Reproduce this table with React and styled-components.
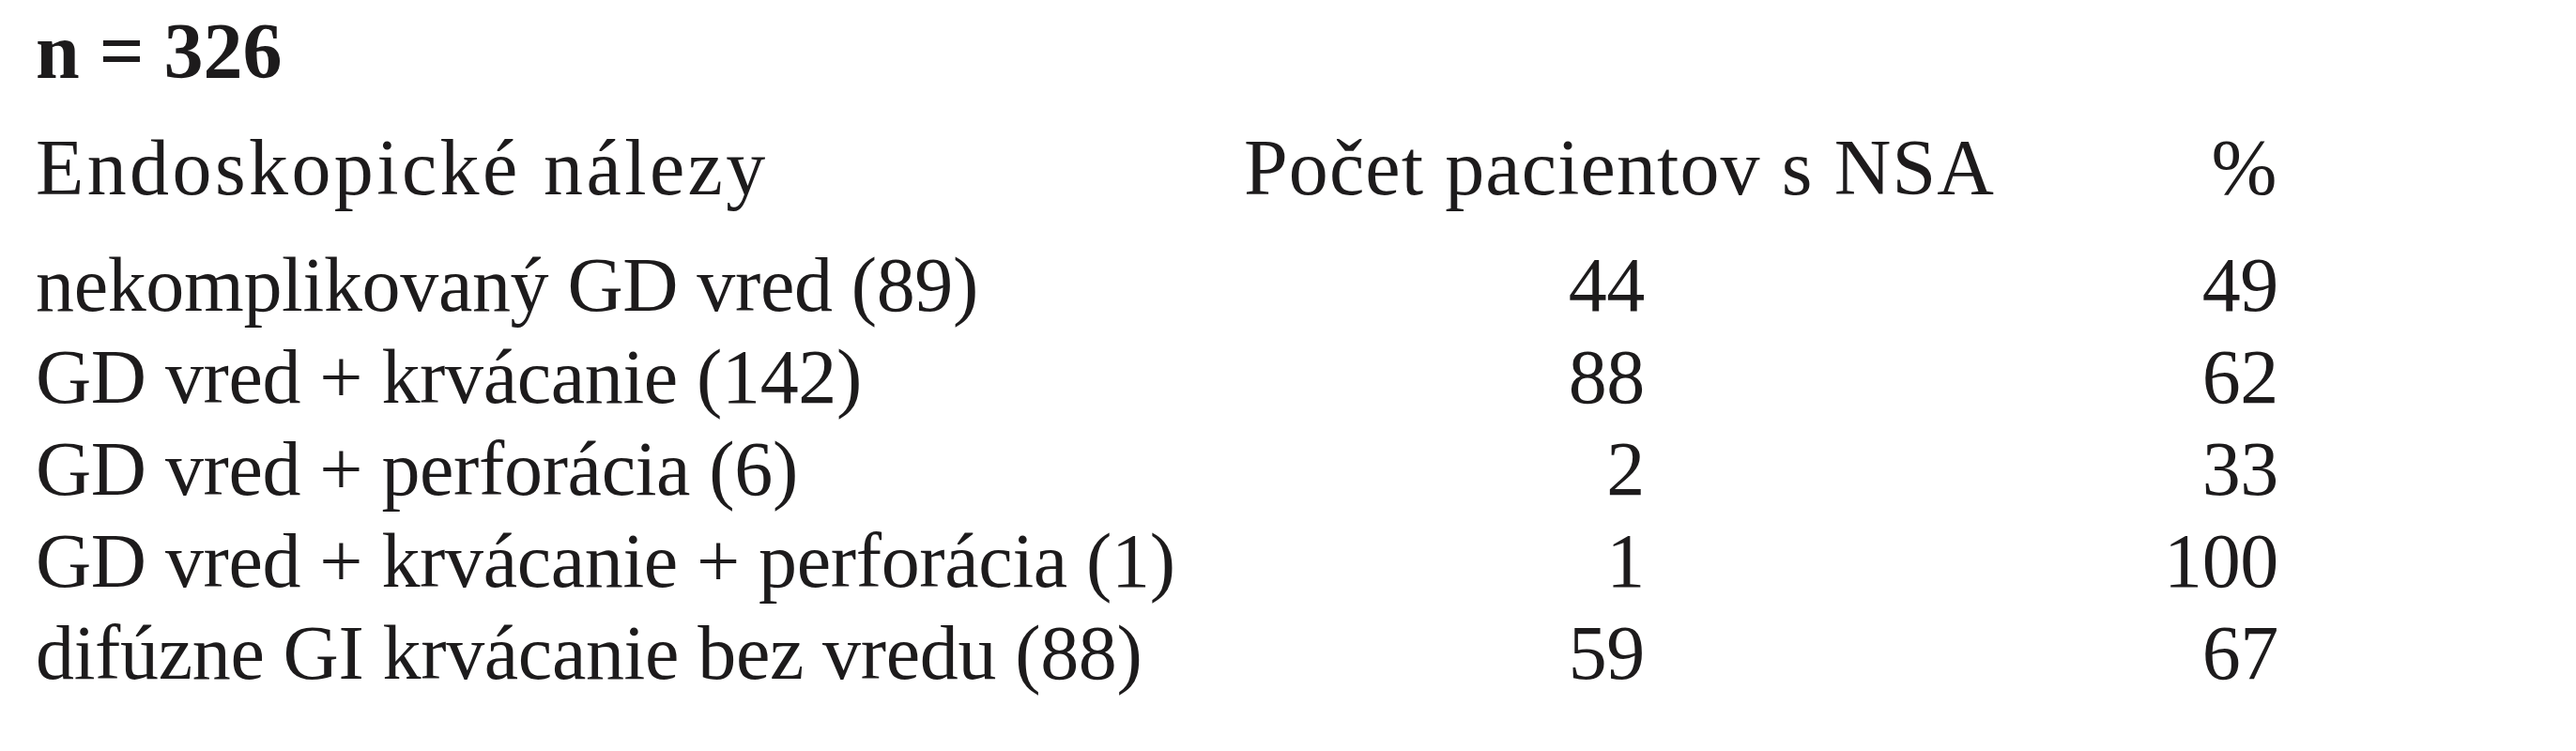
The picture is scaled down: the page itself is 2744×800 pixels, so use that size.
import React from 'react';
import styled, { createGlobalStyle } from 'styled-components';

const GlobalStyle = createGlobalStyle`
  html, body {
    margin: 0;
    padding: 0;
    background: #ffffff;
  }
`;

const Page = styled.div`
  width: 2744px;
  height: 800px;
  box-sizing: border-box;
  padding: 6px 0 0 38px;
  font-family: 'Liberation Serif', 'Times New Roman', serif;
  font-size: 84px;
  color: #1d1b1c;
`;

const Title = styled.div`
  font-weight: 700;
  line-height: 97px;
  margin-bottom: 27px;
`;

const Row = styled.div`
  display: grid;
  grid-template-columns: 1287px 427px 675px;
  font-size: ${(p) => (p.$head ? '84px' : '82px')};
  letter-spacing: ${(p) => (p.$head ? '1.5px' : '-0.35px')};
  line-height: ${(p) => (p.$head ? '97px' : '98px')};
  margin-bottom: ${(p) => (p.$head ? '28px' : '0')};
  white-space: nowrap;
`;

const Cell = styled.div`
  text-align: ${(p) => p.$align || 'left'};
  ${(p) => p.$spacing && `letter-spacing: ${p.$spacing};`}
  overflow: visible;
`;

const rows = [
  ['nekomplikovaný GD vred (89)', '44', '49'],
  ['GD vred + krvácanie (142)', '88', '62'],
  ['GD vred + perforácia (6)', '2', '33'],
  ['GD vred + krvácanie + perforácia (1)', '1', '100'],
  ['difúzne GI krvácanie bez vredu (88)', '59', '67'],
];

export default function App() {
  return (
    <>
      <GlobalStyle />
      <Page>
        <Title>n = 326</Title>
        <Row $head>
          <Cell $spacing="3.4px">Endoskopické nálezy</Cell>
          <Cell $spacing="1.1px">Počet pacientov s NSA</Cell>
          <Cell $align="right">%</Cell>
        </Row>
        {rows.map(([label, count, pct]) => (
          <Row key={label}>
            <Cell>{label}</Cell>
            <Cell $align="right">{count}</Cell>
            <Cell $align="right">{pct}</Cell>
          </Row>
        ))}
      </Page>
    </>
  );
}
